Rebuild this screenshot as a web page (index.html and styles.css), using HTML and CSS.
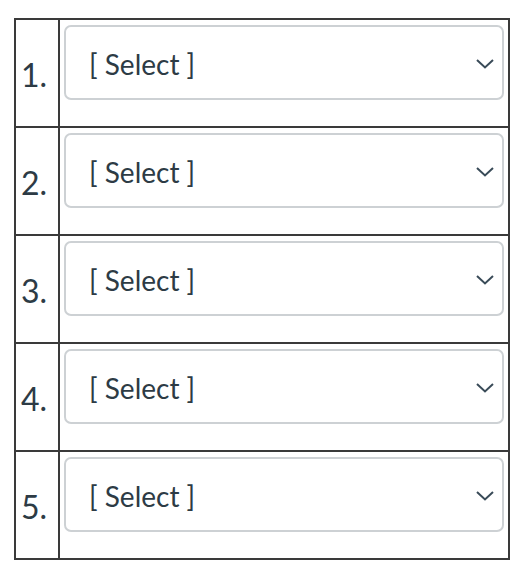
FILE: index.html
```html
<!DOCTYPE html>
<html lang="en">
<head>
<meta charset="utf-8">
<title>Select list</title>
<link rel="stylesheet" href="styles.css">
</head>
<body>
<div class="page">
  <table class="grid">
    <tbody>
      <tr>
        <td class="num">1.</td>
        <td class="field"><div class="select"><span class="label">[ Select ]</span><svg class="chev" viewBox="0 0 18 10" width="18" height="10"><path d="M1 1 L9 8.5 L17 1" fill="none" stroke="#394b58" stroke-width="2"/></svg></div></td>
      </tr>
      <tr>
        <td class="num">2.</td>
        <td class="field"><div class="select"><span class="label">[ Select ]</span><svg class="chev" viewBox="0 0 18 10" width="18" height="10"><path d="M1 1 L9 8.5 L17 1" fill="none" stroke="#394b58" stroke-width="2"/></svg></div></td>
      </tr>
      <tr>
        <td class="num">3.</td>
        <td class="field"><div class="select"><span class="label">[ Select ]</span><svg class="chev" viewBox="0 0 18 10" width="18" height="10"><path d="M1 1 L9 8.5 L17 1" fill="none" stroke="#394b58" stroke-width="2"/></svg></div></td>
      </tr>
      <tr>
        <td class="num">4.</td>
        <td class="field"><div class="select"><span class="label">[ Select ]</span><svg class="chev" viewBox="0 0 18 10" width="18" height="10"><path d="M1 1 L9 8.5 L17 1" fill="none" stroke="#394b58" stroke-width="2"/></svg></div></td>
      </tr>
      <tr>
        <td class="num">5.</td>
        <td class="field"><div class="select"><span class="label">[ Select ]</span><svg class="chev" viewBox="0 0 18 10" width="18" height="10"><path d="M1 1 L9 8.5 L17 1" fill="none" stroke="#394b58" stroke-width="2"/></svg></div></td>
      </tr>
    </tbody>
  </table>
</div>
</body>
</html>
```
FILE: styles.css
```css
html, body {
  margin: 0;
  padding: 0;
  background: #ffffff;
}

.page {
  padding: 18px 14px;
  font-family: Lato, "Liberation Sans", sans-serif;
  color: #2d3b45;
}

.grid {
  border-collapse: separate;
  border-spacing: 0;
  border: 1px solid #3a3a3a;
  width: 496px;
}

.grid td {
  border: 1px solid #3a3a3a;
  height: 108px;
  box-sizing: border-box;
}

.num {
  width: 44px;
  padding: 3px 0 0 5px;
  vertical-align: middle;
  font-size: 32px;
  color: #2d3b45;
}

.field {
  padding: 5px 4px 0 4px;
  vertical-align: top;
}

.select {
  height: 75px;
  box-sizing: border-box;
  border: 2px solid #cdd1d4;
  border-radius: 7px;
  display: flex;
  align-items: center;
  justify-content: space-between;
  padding: 2px 8px 0 23px;
}

.label {
  font-size: 28px;
  color: #2d3b45;
}

.chev {
  display: block;
}
```
